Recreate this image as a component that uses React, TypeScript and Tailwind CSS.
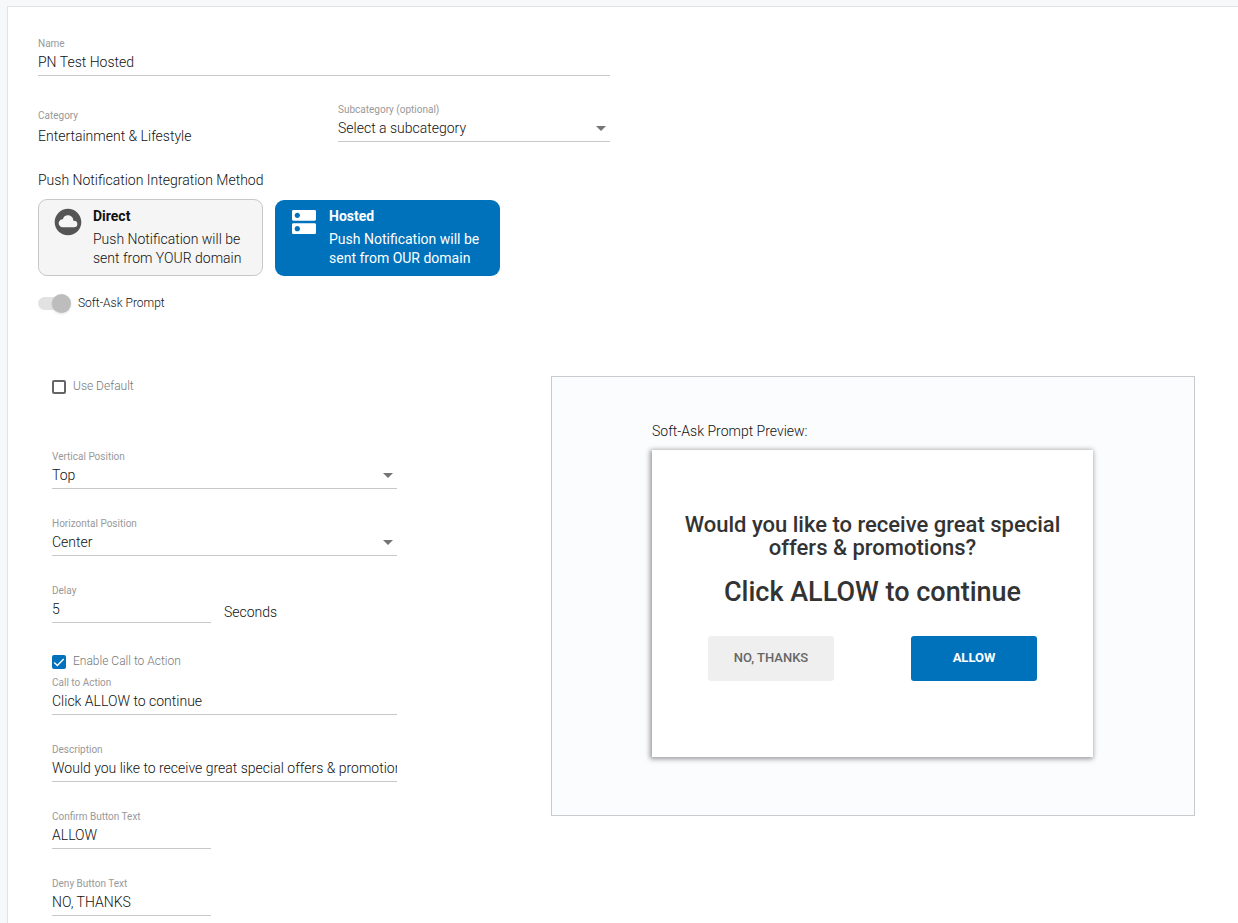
import clsx from "clsx";
import { useState } from "react";
import type { ReactNode } from "react";
import { MdCloudCircle, MdDns } from "react-icons/md";

const labelClass = "block h-4 text-[10px] leading-[18px] font-normal text-[#999]";
const controlClass =
  "block h-[25px] w-full rounded-none border-b border-[#c8c8c8] bg-transparent pb-[2px] text-sm outline-none focus:border-[#0072bc]";

interface TextFieldProps {
  id: string;
  label: string;
  value: string;
  onChange: (value: string) => void;
  className?: string;
}

function TextField({ id, label, value, onChange, className }: TextFieldProps) {
  return (
    <div className={className}>
      <label htmlFor={id} className={labelClass}>
        {label}
      </label>
      <input
        id={id}
        type="text"
        value={value}
        onChange={(e) => onChange(e.target.value)}
        className={controlClass}
      />
    </div>
  );
}

interface SelectFieldProps {
  id: string;
  label: string;
  options: string[];
  className?: string;
}

function SelectField({ id, label, options, className }: SelectFieldProps) {
  return (
    <div className={className}>
      <label htmlFor={id} className={labelClass}>
        {label}
      </label>
      <div className="relative">
        <select id={id} className={clsx(controlClass, "appearance-none pr-5")}>
          {options.map((option) => (
            <option key={option}>{option}</option>
          ))}
        </select>
        <svg
          viewBox="0 0 10 5"
          className="pointer-events-none absolute top-[9px] right-1 h-[5px] w-[10px] fill-[#757575]"
        >
          <path d="M0 0h10L5 5z" />
        </svg>
      </div>
    </div>
  );
}

interface CheckboxProps {
  label: string;
  checked: boolean;
  onChange: (checked: boolean) => void;
}

function Checkbox({ label, checked, onChange }: CheckboxProps) {
  return (
    <label className="flex h-[25px] items-center gap-[7px] text-xs text-[#777]">
      <span className="grid">
        <input
          type="checkbox"
          checked={checked}
          onChange={(e) => onChange(e.target.checked)}
          className="col-start-1 row-start-1 size-[14px] appearance-none rounded-[2px] border-2 border-[#666] checked:border-[#0072bc] checked:bg-[#0072bc]"
        />
        {checked && (
          <svg
            viewBox="0 0 14 14"
            className="pointer-events-none col-start-1 row-start-1 size-[14px] fill-none stroke-white"
          >
            <path d="M2.2 7.4l3.2 3.2 6.3-6.6" strokeWidth="1.4" />
          </svg>
        )}
      </span>
      <span className="pb-[2px]">{label}</span>
    </label>
  );
}

interface MethodButtonProps {
  title: string;
  icon: ReactNode;
  selected: boolean;
  onClick: () => void;
  children: ReactNode;
}

function MethodButton({ title, icon, selected, onClick, children }: MethodButtonProps) {
  return (
    <button
      type="button"
      aria-pressed={selected}
      onClick={onClick}
      className={clsx(
        "flex w-[225px] items-start gap-[9px] rounded-[9px] pt-[6px] pl-[13px] text-left text-sm",
        selected
          ? "h-[76px] bg-[#0072bc] font-normal text-white"
          : "h-[77px] border border-[#c8c8c8] bg-[#f5f5f5]"
      )}
    >
      {icon}
      <span className="block">
        <span className="block leading-5 font-bold">{title}</span>
        <span className="block pt-1 leading-[19px]">{children}</span>
      </span>
    </button>
  );
}

export default function App() {
  const [name, setName] = useState("PN Test Hosted");
  const [method, setMethod] = useState("hosted");
  const [softAsk, setSoftAsk] = useState(true);
  const [useDefault, setUseDefault] = useState(false);
  const [delay, setDelay] = useState("5");
  const [ctaEnabled, setCtaEnabled] = useState(true);
  const [cta, setCta] = useState("Click ALLOW to continue");
  const [description, setDescription] = useState(
    "Would you like to receive great special offers & promotions?"
  );
  const [confirmText, setConfirmText] = useState("ALLOW");
  const [denyText, setDenyText] = useState("NO, THANKS");

  return (
    <div className="flex min-h-screen flex-col bg-[#f7f8fa] pt-[6px] pl-[7px] font-[Roboto,sans-serif] text-sm font-light text-[#111]">
      <main className="flex-1 border-t border-l border-[#e2e2e2] bg-white pt-7 pb-2 pl-[30px]">
        {/* General settings */}
        <div className="max-w-[572px]">
          <TextField id="name" label="Name" value={name} onChange={setName} />
          <div className="mt-[25px] grid grid-cols-[minmax(0,1fr)_272px] gap-7">
            <div className="pt-[6px]">
              <div className={labelClass}>Category</div>
              <div className="pt-[3px]">Entertainment &amp; Lifestyle</div>
            </div>
            <SelectField
              id="subcategory"
              label="Subcategory (optional)"
              options={["Select a subcategory"]}
            />
          </div>
        </div>

        {/* Integration method */}
        <h2 className="mt-6 font-light">Push Notification Integration Method</h2>
        <div className="mt-[9px] flex items-end gap-3">
          <MethodButton
            title="Direct"
            icon={<MdCloudCircle className="size-8 shrink-0 text-[#555]" />}
            selected={method === "direct"}
            onClick={() => setMethod("direct")}
          >
            Push Notification will be
            <br />
            sent from YOUR domain
          </MethodButton>
          <MethodButton
            title="Hosted"
            icon={<MdDns className="size-8 shrink-0" />}
            selected={method === "hosted"}
            onClick={() => setMethod("hosted")}
          >
            Push Notification will be
            <br />
            sent from OUR domain
          </MethodButton>
        </div>

        <label className="mt-[17px] flex h-5 w-fit items-center gap-[7px] text-xs">
          <span className="grid w-[33px] items-center">
            <span className="col-start-1 row-start-1 h-[13px] rounded-full bg-[#e2e2e2]" />
            <input
              type="checkbox"
              role="switch"
              checked={softAsk}
              onChange={(e) => setSoftAsk(e.target.checked)}
              className="col-start-1 row-start-1 size-[19px] appearance-none rounded-full bg-[#bdbdbd] shadow-sm checked:justify-self-end"
            />
          </span>
          Soft-Ask Prompt
        </label>

        {/* Soft-ask prompt */}
        <div className="mt-[61px] flex items-start gap-[154px] pr-[43px] pl-[14px]">
          <div className="w-[345px] shrink-0">
            <Checkbox label="Use Default" checked={useDefault} onChange={setUseDefault} />
            <div className="mt-[49px] flex flex-col gap-[26px]">
              <SelectField id="vertical" label="Vertical Position" options={["Top", "Bottom"]} />
              <SelectField
                id="horizontal"
                label="Horizontal Position"
                options={["Center", "Left", "Right"]}
              />
              <div className="flex items-end gap-[13px]">
                <TextField
                  id="delay"
                  label="Delay"
                  value={delay}
                  onChange={setDelay}
                  className="w-[159px]"
                />
                <span className="pb-px">Seconds</span>
              </div>
              <div>
                <Checkbox
                  label="Enable Call to Action"
                  checked={ctaEnabled}
                  onChange={setCtaEnabled}
                />
                <TextField id="cta" label="Call to Action" value={cta} onChange={setCta} />
              </div>
              <TextField
                id="description"
                label="Description"
                value={description}
                onChange={setDescription}
              />
              <TextField
                id="confirm"
                label="Confirm Button Text"
                value={confirmText}
                onChange={setConfirmText}
                className="w-[159px]"
              />
              <TextField
                id="deny"
                label="Deny Button Text"
                value={denyText}
                onChange={setDenyText}
                className="w-[159px]"
              />
            </div>
          </div>

          {/* Preview */}
          <section className="mt-[2px] flex-1 border border-[#c8cacd] bg-[#fbfcfe] pt-11 pr-[101px] pb-[58px] pl-[100px]">
            <h2 className="font-light">Soft-Ask Prompt Preview:</h2>
            <div className="mt-[9px] bg-white px-[30px] pt-[63px] pb-[76px] text-center font-medium text-[#333] shadow-[-1px_1px_5px_1px_rgba(0,0,0,0.4)]">
              <p className="text-[22px] leading-[23px]">{description}</p>
              {ctaEnabled && <p className="mt-[17px] text-[27px] leading-8">{cta}</p>}
              <div className="mt-7 flex justify-between px-[26px] text-[13px]">
                <button
                  type="button"
                  className="h-[45px] w-[126px] rounded-[3px] bg-[#efefef] text-[#666]"
                >
                  {denyText}
                </button>
                <button
                  type="button"
                  className="h-[45px] w-[126px] rounded-[3px] bg-[#0072bc] font-bold text-white"
                >
                  {confirmText}
                </button>
              </div>
            </div>
          </section>
        </div>
      </main>
    </div>
  );
}
